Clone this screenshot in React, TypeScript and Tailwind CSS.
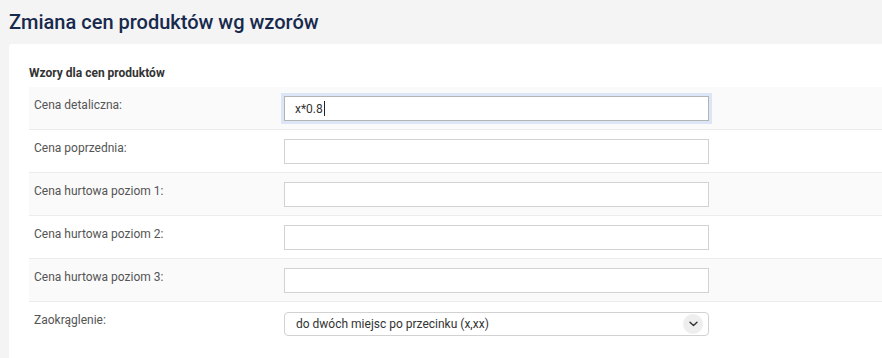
import React from 'react';

const fields = [
  { label: 'Cena detaliczna:', value: 'x*0.8', focused: true },
  { label: 'Cena poprzednia:', value: '' },
  { label: 'Cena hurtowa poziom 1:', value: '' },
  { label: 'Cena hurtowa poziom 2:', value: '' },
  { label: 'Cena hurtowa poziom 3:', value: '' },
];

const Row: React.FC<{ label: string; striped: boolean; last?: boolean; children: React.ReactNode }> = ({
  label,
  striped,
  last,
  children,
}) => (
  <div
    className={`flex h-[43px] ${last ? '' : 'border-b border-[#ececec]'} ${striped ? 'bg-[#fafafa]' : 'bg-white'}`}
  >
    <div className="w-[255px] shrink-0 pl-[5px] pt-[10px] text-[12px] leading-[16px] text-[#555]">{label}</div>
    <div className="pt-[9px]">{children}</div>
  </div>
);

export default function App() {
  return (
    <div className="min-h-screen bg-[#f4f4f4] font-['Roboto',sans-serif]">
      <h1 className="px-[9px] pt-[8px] pb-[8px] text-[20px] leading-[28px] font-medium text-[#172a4d]">
        Zmiana cen produktów wg wzorów
      </h1>
      <div className="ml-[9px] min-h-[314px] rounded-tl-[3px] bg-white pl-[20px] pt-[21px]">
        <h2 className="mb-[6px] text-[12px] leading-[16px] font-bold text-[#333]">Wzory dla cen produktów</h2>
        {fields.map((f, i) => (
          <Row key={f.label} label={f.label} striped={i % 2 === 0}>
            {f.focused ? (
              <div className="flex h-[25px] w-[425px] items-center border border-[#b4b4b4] bg-white pl-[10px] text-[12px] text-[#333] shadow-[0_0_0_3px_#dde6f7]">
                {f.value}
                <span className="ml-[1px] inline-block h-[15px] w-px bg-[#222]" />
              </div>
            ) : (
              <div className="h-[25px] w-[425px] border border-[#d2d2d2] bg-white" />
            )}
          </Row>
        ))}
        <Row label="Zaokrąglenie:" striped={false} last>
          <div className="mt-[1px] flex h-[24px] w-[425px] items-center justify-between rounded-[4px] border border-[#d2d2d2] bg-white pl-[11px] pr-[5px] text-[12px] text-[#333]">
            <span>do dwóch miejsc po przecinku (x,xx)</span>
            <span className="flex h-[20px] w-[20px] items-center justify-center rounded-full bg-[#eeeeee]">
              <svg width="9" height="6" viewBox="0 0 9 6" fill="none">
                <path d="M1 1.2 4.5 4.6 8 1.2" stroke="#333" strokeWidth="1.4" strokeLinecap="round" strokeLinejoin="round" />
              </svg>
            </span>
          </div>
        </Row>
      </div>
    </div>
  );
}
